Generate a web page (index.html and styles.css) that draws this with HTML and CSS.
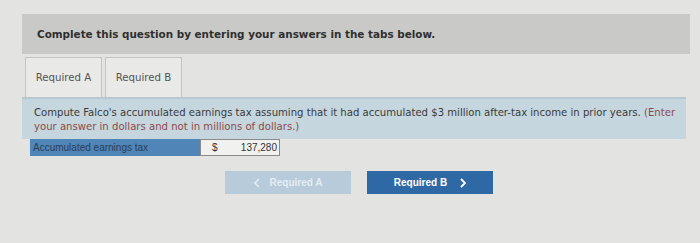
FILE: index.html
```html
<!DOCTYPE html>
<html lang="en">
<head>
    <meta charset="UTF-8">
    <title>Required A</title>
    <link rel="stylesheet" href="styles.css">
</head>
<body>
    <div class="page">
        <div class="header">
            <h1>Complete this question by entering your answers in the tabs below.</h1>
        </div>

        <!-- Tabs -->
        <div class="tabs">
            <div class="tab active">Required A</div>
            <div class="tab">Required B</div>
        </div>

        <!-- Question -->
        <div class="question">
            <p>Compute Falco's accumulated earnings tax assuming that it had accumulated $3 million after-tax income in prior years. <span class="note">(Enter your answer in dollars and not in millions of dollars.)</span></p>
        </div>

        <div class="answer-row">
            <div class="answer-label">Accumulated earnings tax</div>
            <div class="answer-input">
                <span class="currency">$</span>
                <span class="value">137,280</span>
            </div>
        </div>

        <div class="nav">
            <button class="nav-btn prev" disabled>
                <svg class="arrow" width="6" height="10" viewBox="0 0 6 10"><path d="M5 1 L1 5 L5 9" fill="none" stroke="currentColor" stroke-width="1.6"/></svg>
                Required A
            </button>
            <button class="nav-btn next">
                Required B
                <svg class="arrow right" width="6" height="10" viewBox="0 0 6 10"><path d="M1 1 L5 5 L1 9" fill="none" stroke="currentColor" stroke-width="1.8"/></svg>
            </button>
        </div>
    </div>
</body>
</html>
```

FILE: styles.css
```css
* {
    margin: 0;
    padding: 0;
    box-sizing: border-box;
}
body {
    background: #e3e3e1;
    color: #333;
    font-family: "DejaVu Sans", Verdana, sans-serif;
}
.page {
    padding: 14px 10px 0 22px;
}
.header {
    height: 40px;
    background: #c9c9c7;
    display: flex;
    align-items: center;
    padding-left: 15px;
}
h1 {
    font-size: 10.4px;
    font-weight: bold;
    color: #2f2f2f;
}
.tabs {
    display: flex;
    gap: 3px;
    margin-top: 3px;
    padding-left: 3px;
}
.tab {
    width: 77px;
    height: 40px;
    display: flex;
    align-items: center;
    justify-content: center;
    font-size: 10.2px;
    color: #555;
    background: #e9e9e7;
    border: 1px solid #c4c4c2;
    border-bottom: none;
}
.question {
    background: #c5d6de;
    border-top: 2px solid #b8c8d0;
    padding: 7px 10px 5px 12px;
    margin-right: 4px;
    font-size: 10.1px;
    line-height: 14px;
    color: #3a3a3a;
}
.note {
    color: #8e4a4a;
}
.answer-row {
    display: flex;
    margin: 0 0 0 8px;
    height: 17px;
}
.answer-label {
    width: 170px;
    background: #4f85b7;
    color: #2b3f55;
    font-family: "Liberation Sans", Arial, sans-serif;
    font-size: 10px;
    line-height: 17px;
    padding-left: 3px;
}
.answer-input {
    width: 80px;
    display: flex;
    justify-content: space-between;
    align-items: center;
    background: #f1f1ef;
    border: 1px solid #8a8a8a;
    padding: 0 2px 0 11px;
    font-family: "Liberation Sans", Arial, sans-serif;
    font-size: 10px;
    color: #333;
}
.nav {
    display: flex;
    gap: 16px;
    margin: 15px 0 0 203px;
}
.nav-btn {
    width: 126px;
    height: 23px;
    border: none;
    display: flex;
    align-items: center;
    justify-content: center;
    font-family: "Liberation Sans", Arial, sans-serif;
    font-size: 10px;
    font-weight: bold;
    color: #fff;
}
.arrow {
    margin-right: 10px;
}
.arrow.right {
    margin: 0 0 0 13px;
}
.prev {
    background: #b8cbdb;
    color: #e4ecf2;
}
.next {
    background: #2f69a5;
    cursor: pointer;
}
```
